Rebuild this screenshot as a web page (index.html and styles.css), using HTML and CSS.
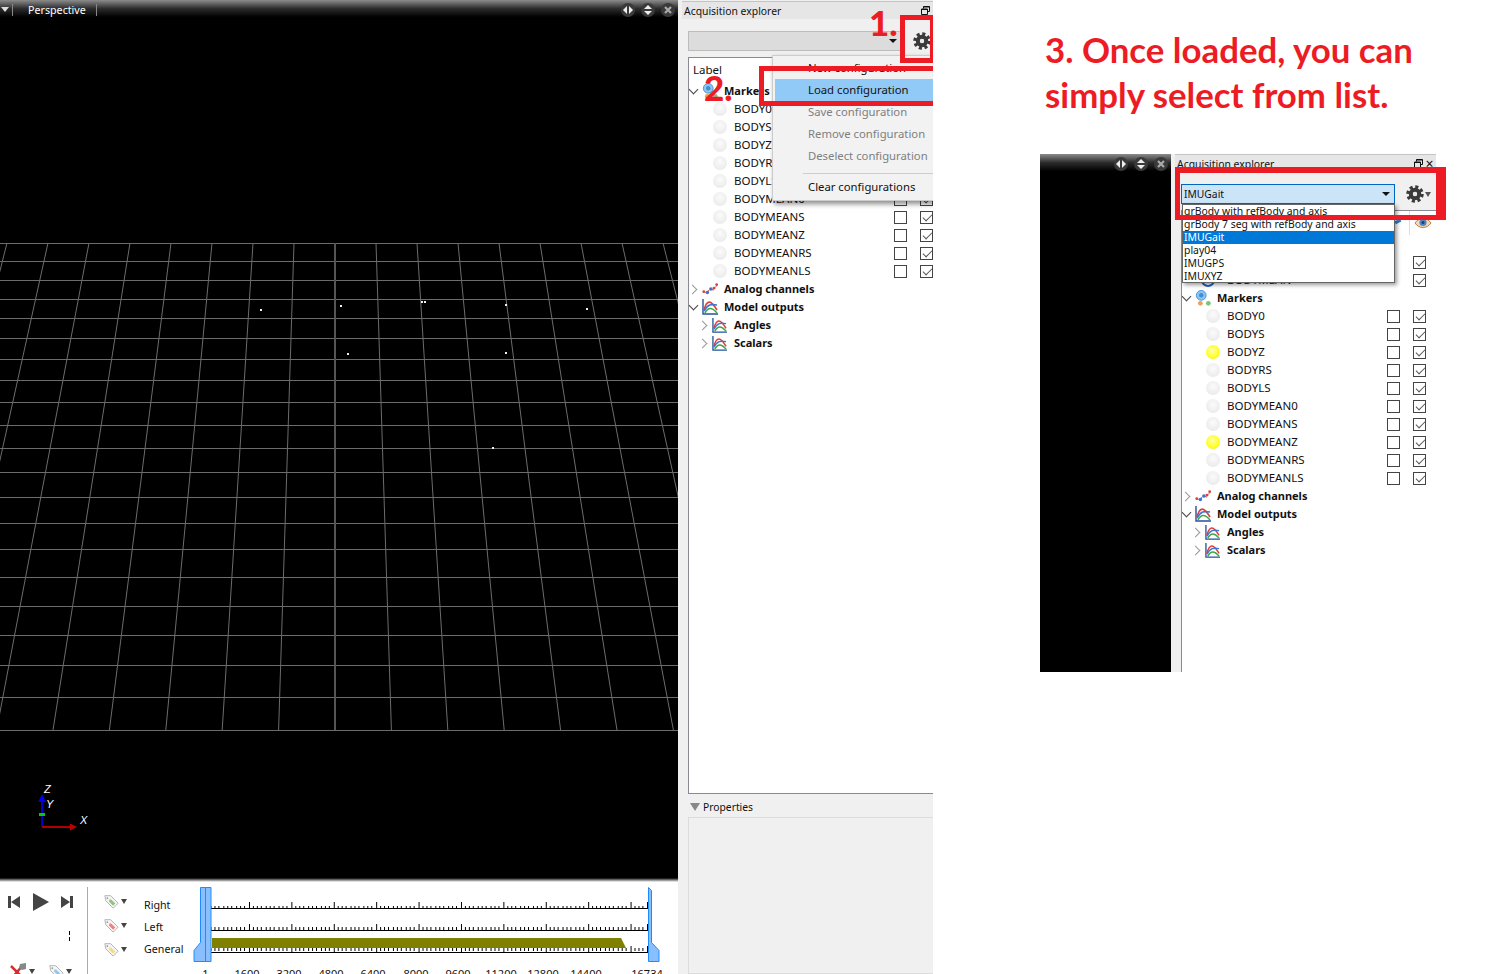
FILE: index.html
```html
<!DOCTYPE html>
<html lang="en">

<head>
    <meta charset="UTF-8">
    <title>Acquisition explorer - configurations</title>
    <link rel="stylesheet" href="styles.css">
</head>

<body>
    <svg class="defs">
        <symbol id="gear" viewBox="0 0 18 18">
            <circle cx="9" cy="9" r="7" fill="none" stroke="#3a3a3a" stroke-width="3.500" stroke-dasharray="3 2.500"></circle>
            <circle cx="9" cy="9" r="4.200" fill="none" stroke="#3a3a3a" stroke-width="4"></circle>
            <circle cx="9" cy="9" r="2" fill="#e8e8e8"></circle>
        </symbol>
        <symbol id="chart" viewBox="0 0 16 16">
            <path d="M1 0v15H16" fill="none" stroke="#24509e" stroke-width="1.400"></path>
            <path d="M2 11C5 0 9 1 15 11" fill="none" stroke="#e0403c" stroke-width="1.600"></path>
            <path d="M2 12C6 5 9 5 15 6" fill="none" stroke="#3f74d0" stroke-width="1.600"></path>
            <path d="M3 14C6 8 10 8 15 14" fill="none" stroke="#3fa648" stroke-width="1.600"></path>
        </symbol>
        <symbol id="analog" viewBox="0 0 18 14">
            <path d="M1 10l4 1 5-4 3 1 4-6" fill="none" stroke="#e0403c" stroke-width="1.200" stroke-dasharray="2 1"></path>
            <circle cx="2" cy="10" r="1.600" fill="#e0403c"></circle>
            <circle cx="6" cy="11" r="2" fill="#3f74d0"></circle>
            <circle cx="10" cy="7" r="2" fill="#3f74d0"></circle>
            <circle cx="13.500" cy="6" r="1.600" fill="#e0403c"></circle>
            <circle cx="16.500" cy="2" r="1.600" fill="#e0403c"></circle>
        </symbol>
        <symbol id="markers" viewBox="0 0 18 18">
            <circle cx="7" cy="6" r="5.500" fill="#8fc4ee" stroke="#3f8fd6"></circle>
            <circle cx="7" cy="6" r="2.500" fill="#3f8fd6"></circle>
            <circle cx="6" cy="15" r="2.700" fill="#f0a050"></circle>
            <circle cx="15" cy="15" r="2.700" fill="#7cc47c"></circle>
        </symbol>
        <symbol id="tag" viewBox="0 0 18 18">
            <path d="M1 2h7l9 9-6 6-9-9z" fill="#f4f4f4" stroke="#aaa"></path>
            <path d="M6.500 6.500h2l5 5-2.500 2.500-5-5z" fill="currentColor"></path>
            <circle cx="4" cy="5" r="1" fill="#999"></circle>
        </symbol>
        <symbol id="eye" viewBox="0 0 18 12">
            <path d="M1 6c4-6 12-6 16 0-4 6-12 6-16 0z" fill="#f4d9b8" stroke="#c8793c"></path>
            <circle cx="9" cy="5.500" r="3.600" fill="#4d86c8"></circle>
            <circle cx="9" cy="5.500" r="1.500" fill="#1d3f70"></circle>
        </symbol>
        <symbol id="hresize" viewBox="0 0 14 14">
            <circle cx="7" cy="7" r="7" fill="#3a3a3a"></circle>
            <path d="M6 3v8L2 7zM8 3v8l4-4z" fill="#eee"></path>
        </symbol>
        <symbol id="vresize" viewBox="0 0 14 14">
            <circle cx="7" cy="7" r="7" fill="#3a3a3a"></circle>
            <path d="M3 6h8L7 2zM3 8h8l-4 4z" fill="#eee"></path>
        </symbol>
        <symbol id="closer" viewBox="0 0 14 14">
            <circle cx="7" cy="7" r="7" fill="#3a3a3a"></circle>
            <path d="M4 4l6 6M10 4l-6 6" stroke="#aaa" stroke-width="2.200"></path>
        </symbol>
        <symbol id="restore" viewBox="0 0 9 9">
            <path d="M2.500 2.500V.5h6v5h-2M.5 3h6v5.500h-6z" fill="none" stroke="#111"></path>
            <path d="M2.500 1h6M.5 3.500h6" stroke="#111"></path>
        </symbol>
    </svg>

    <div class="app">
        <div class="viewer">
            <div class="dock-bar">
                <span class="dock-menu"></span>
                <span class="dock-name">Perspective</span>
                <span class="dock-buttons">
                    <svg class="dock-btn"><use href="#hresize"></use></svg>
                    <svg class="dock-btn"><use href="#vresize"></use></svg>
                    <svg class="dock-btn"><use href="#closer"></use></svg>
                </span>
            </div>
            <svg class="scene" viewBox="0 19 678 859">
                <path class="grid" d="M0 243.500H678M0 261.500H678M0 280.500H678M0 299.500H678M0 318.500H678M0 338.500H678M0 359.500H678M0 380.500H678M0 402.500H678M0 425.500H678M0 448.500H678M0 472.500H678M0 497.500H678M0 523.500H678M0 549.500H678M0 577.500H678M0 606.500H678M0 635.500H678M0 665.500H678M0 697.500H678M0 730.500H678"></path>
                <path class="grid" d="M7 243L-116.200 730M48 243L-59.800 730M89 243L-3.400 730M130 243L53 730M171 243L109.400 730M212 243L165.800 730M253 243L222.200 730M294 243L278.600 730M376 243L391.400 730M417 243L447.800 730M458 243L504.200 730M499 243L560.600 730M540 243L617 730M581 243L673.400 730M622 243L729.800 730M663 243L786.200 730"></path>
                <path class="grid-axis" d="M335 243V730"></path>
                <path class="points" d="M260 309h2v2h-2zM340 305h2v2h-2zM421 301h2v2h-2zM424 301h2v2h-2zM505 304h2v2h-2zM586 308h2v2h-2zM347 353h2v2h-2zM505 352h2v2h-2zM492 447h2v2h-2z"></path>
                <path d="M42 827V800" stroke="#0000c8" stroke-width="2"></path>
                <path d="M38 802l4-8 4 8z" fill="#0000e0"></path>
                <path d="M42 827H72" stroke="#b00000" stroke-width="2"></path>
                <path d="M70 823.500l7 3.500-7 3.500z" fill="#c00000"></path>
                <path d="M39 814.500h6" stroke="#00d000" stroke-width="3"></path>
                <text class="axis-label" x="44" y="793">Z</text>
                <text class="axis-label" x="46" y="808">Y</text>
                <text class="axis-label" x="80" y="824">X</text>
            </svg>
            <div class="timeline">
                <div class="controls">
                    <div class="transport">
                        <svg class="skip" viewBox="0 0 12 12"><path d="M0 0h3v12H0zM12 0v12L3 6z"></path></svg>
                        <svg class="play" viewBox="0 0 16 18"><path d="M0 0l16 9-16 9z"></path></svg>
                        <svg class="skip" viewBox="0 0 12 12"><path d="M12 0H9v12h3zM0 0v12l9-6z"></path></svg>
                    </div>
                    <div class="grip"></div>
                    <div class="tools">
                        <svg class="wrench" viewBox="0 0 18 18">
                            <path d="M2 4l13 13M14 3L3 16" stroke="#d03030" stroke-width="2.500"></path>
                            <path d="M17 1l-6 1-1 4 3 2 4-1z" fill="#888"></path>
                        </svg>
                        <span class="down"></span>
                        <svg class="tag tag-blue"><use href="#tag"></use></svg>
                        <span class="down"></span>
                    </div>
                </div>
                <div class="events">
                    <div class="event-tags">
                        <div class="event"><svg class="tag tag-green"><use href="#tag"></use></svg><span class="down"></span></div>
                        <div class="event"><svg class="tag tag-red"><use href="#tag"></use></svg><span class="down"></span></div>
                        <div class="event"><svg class="tag tag-yellow"><use href="#tag"></use></svg><span class="down"></span></div>
                    </div>
                    <div class="event-names">
                        <div class="event-name">Right</div>
                        <div class="event-name">Left</div>
                        <div class="event-name">General</div>
                    </div>
                </div>
                <svg class="tracks" viewBox="190 887 488 87">
                    <defs>
                        <pattern id="ticks" patternUnits="userSpaceOnUse" x="204.600" y="902" width="42.400" height="7">
                            <path d="M2 0v7M6.240 3.500v3.500M10.480 3.500v3.500M14.720 3.500v3.500M18.960 3.500v3.500M23.200 3.500v3.500M27.440 3.500v3.500M31.680 3.500v3.500M35.920 3.500v3.500M40.160 3.500v3.500" stroke="#000" stroke-width="1" shape-rendering="crispEdges"></path>
                        </pattern>
                    </defs>
                    <rect x="204.600" y="902" width="443" height="7" fill="url(#ticks)"></rect>
                    <rect x="204.600" y="924" width="443" height="7" fill="url(#ticks)"></rect>
                    <rect x="204.600" y="946" width="443" height="7" fill="url(#ticks)"></rect>
                    <path d="M206 908.500H648M206 930.500H648M206 952.500H648M647.500 902V909M647.500 924V931M647.500 946V953" stroke="#000" fill="none"></path>
                    <path d="M212 938H621L626 948H212z" fill="#808000"></path>
                    <path class="cursor" d="M200.500 887.500h5v74h-11.500v-11l6.500-8zM205.500 887.500h5.500v74h-5.500z"></path>
                    <path class="cursor" d="M648.500 887.500l3 3v52l7.500 8v11h-10.500z"></path>
                    <text class="tick-label" x="205.500" y="978" text-anchor="middle">1</text>
                    <text class="tick-label" x="247" y="978" text-anchor="middle">1600</text>
                    <text class="tick-label" x="289" y="978" text-anchor="middle">3200</text>
                    <text class="tick-label" x="331" y="978" text-anchor="middle">4800</text>
                    <text class="tick-label" x="373" y="978" text-anchor="middle">6400</text>
                    <text class="tick-label" x="416" y="978" text-anchor="middle">8000</text>
                    <text class="tick-label" x="458" y="978" text-anchor="middle">9600</text>
                    <text class="tick-label" x="501" y="978" text-anchor="middle">11200</text>
                    <text class="tick-label" x="543" y="978" text-anchor="middle">12800</text>
                    <text class="tick-label" x="586" y="978" text-anchor="middle">14400</text>
                    <text class="tick-label" x="647" y="978" text-anchor="middle">16734</text>
                </svg>
            </div>
        </div>

        <div class="panel panel-main">
            <div class="panel-title"><span class="panel-name">Acquisition explorer</span><svg class="restore"><use href="#restore"></use></svg><span class="panel-close">×</span></div>
            <div class="config-bar">
                <div class="combo combo-off"><span class="combo-text"></span><span class="combo-arrow"></span></div>
                <svg class="gear"><use href="#gear"></use></svg>
            </div>
            <div class="tree">
                <div class="tree-head">Label</div>
                <div class="row group"><span class="chev open"></span><svg class="ico"><use href="#markers"></use></svg><span class="name">Markers</span></div>
                <div class="row"><span class="chev none"></span><span class="led"></span><span class="name">BODY0</span><span class="box"></span><span class="box on"></span></div>
                <div class="row"><span class="chev none"></span><span class="led"></span><span class="name">BODYS</span><span class="box"></span><span class="box on"></span></div>
                <div class="row"><span class="chev none"></span><span class="led"></span><span class="name">BODYZ</span><span class="box"></span><span class="box on"></span></div>
                <div class="row"><span class="chev none"></span><span class="led"></span><span class="name">BODYRS</span><span class="box"></span><span class="box on"></span></div>
                <div class="row"><span class="chev none"></span><span class="led"></span><span class="name">BODYLS</span><span class="box"></span><span class="box on"></span></div>
                <div class="row"><span class="chev none"></span><span class="led"></span><span class="name">BODYMEAN0</span><span class="box"></span><span class="box on"></span></div>
                <div class="row"><span class="chev none"></span><span class="led"></span><span class="name">BODYMEANS</span><span class="box"></span><span class="box on"></span></div>
                <div class="row"><span class="chev none"></span><span class="led"></span><span class="name">BODYMEANZ</span><span class="box"></span><span class="box on"></span></div>
                <div class="row"><span class="chev none"></span><span class="led"></span><span class="name">BODYMEANRS</span><span class="box"></span><span class="box on"></span></div>
                <div class="row"><span class="chev none"></span><span class="led"></span><span class="name">BODYMEANLS</span><span class="box"></span><span class="box on"></span></div>
                <div class="row group"><span class="chev"></span><svg class="ico"><use href="#analog"></use></svg><span class="name">Analog channels</span></div>
                <div class="row group"><span class="chev open"></span><svg class="ico"><use href="#chart"></use></svg><span class="name">Model outputs</span></div>
                <div class="row sub"><span class="chev"></span><svg class="ico"><use href="#chart"></use></svg><span class="name">Angles</span></div>
                <div class="row sub"><span class="chev"></span><svg class="ico"><use href="#chart"></use></svg><span class="name">Scalars</span></div>
            </div>
            <div class="props-head"><span class="props-arrow"></span>Properties</div>
            <div class="props-body"></div>

            <!-- menu and annotations lie over the panel -->
            <div class="menu">
                <div class="menu-item">New configuration</div>
                <div class="menu-item active">Load configuration</div>
                <div class="menu-item off">Save configuration</div>
                <div class="menu-item off">Remove configuration</div>
                <div class="menu-item off">Deselect configuration</div>
                <div class="menu-sep"></div>
                <div class="menu-item">Clear configurations</div>
            </div>
            <div class="mark mark-gear"></div>
            <div class="mark mark-load"></div>
            <span class="step step-1">1.</span>
            <span class="step step-2">2.</span>
        </div>

        <div class="side">
            <h1 class="side-title">3. Once loaded, you can<br>simply select from list.</h1>
            <div class="mini">
                <div class="mini-viewer">
                    <div class="dock-bar">
                        <span class="dock-buttons">
                            <svg class="dock-btn"><use href="#hresize"></use></svg>
                            <svg class="dock-btn"><use href="#vresize"></use></svg>
                            <svg class="dock-btn"><use href="#closer"></use></svg>
                        </span>
                    </div>
                </div>
                <div class="panel panel-mini">
                    <div class="panel-title"><span class="panel-name">Acquisition explorer</span><svg class="restore"><use href="#restore"></use></svg><span class="panel-close">×</span></div>
                    <div class="config-bar">
                        <div class="combo combo-on"><span class="combo-text">IMUGait</span><span class="combo-arrow"></span></div>
                        <svg class="gear"><use href="#gear"></use></svg>
                        <span class="gear-arrow"></span>
                    </div>
                    <div class="tree">
                        <div class="tree-head">Label<span class="head-pin"></span><span class="head-cell"><svg class="head-eye"><use href="#eye"></use></svg></span></div>
                        <div class="row group"><span class="chev open"></span><svg class="ico"><use href="#markers"></use></svg><span class="name">Segments</span></div>
                        <div class="row"><span class="chev none"></span><span class="led"></span><span class="name">BODY</span><span class="box on"></span></div>
                        <div class="row"><span class="chev none"></span><span class="led ring"></span><span class="name">BODYMEAN</span><span class="box on"></span></div>
                        <div class="row group"><span class="chev open"></span><svg class="ico"><use href="#markers"></use></svg><span class="name">Markers</span></div>
                        <div class="row"><span class="chev none"></span><span class="led"></span><span class="name">BODY0</span><span class="box"></span><span class="box on"></span></div>
                        <div class="row"><span class="chev none"></span><span class="led"></span><span class="name">BODYS</span><span class="box"></span><span class="box on"></span></div>
                        <div class="row"><span class="chev none"></span><span class="led lit"></span><span class="name">BODYZ</span><span class="box"></span><span class="box on"></span></div>
                        <div class="row"><span class="chev none"></span><span class="led"></span><span class="name">BODYRS</span><span class="box"></span><span class="box on"></span></div>
                        <div class="row"><span class="chev none"></span><span class="led"></span><span class="name">BODYLS</span><span class="box"></span><span class="box on"></span></div>
                        <div class="row"><span class="chev none"></span><span class="led"></span><span class="name">BODYMEAN0</span><span class="box"></span><span class="box on"></span></div>
                        <div class="row"><span class="chev none"></span><span class="led"></span><span class="name">BODYMEANS</span><span class="box"></span><span class="box on"></span></div>
                        <div class="row"><span class="chev none"></span><span class="led lit"></span><span class="name">BODYMEANZ</span><span class="box"></span><span class="box on"></span></div>
                        <div class="row"><span class="chev none"></span><span class="led"></span><span class="name">BODYMEANRS</span><span class="box"></span><span class="box on"></span></div>
                        <div class="row"><span class="chev none"></span><span class="led"></span><span class="name">BODYMEANLS</span><span class="box"></span><span class="box on"></span></div>
                        <div class="row group"><span class="chev"></span><svg class="ico"><use href="#analog"></use></svg><span class="name">Analog channels</span></div>
                        <div class="row group"><span class="chev open"></span><svg class="ico"><use href="#chart"></use></svg><span class="name">Model outputs</span></div>
                        <div class="row sub"><span class="chev"></span><svg class="ico"><use href="#chart"></use></svg><span class="name">Angles</span></div>
                        <div class="row sub"><span class="chev"></span><svg class="ico"><use href="#chart"></use></svg><span class="name">Scalars</span></div>
                    </div>
                    <div class="dropdown">
                        <div class="drop-item">grBody with refBody and axis</div>
                        <div class="drop-item">grBody 7 seg with refBody and axis</div>
                        <div class="drop-item selected">IMUGait</div>
                        <div class="drop-item">play04</div>
                        <div class="drop-item">IMUGPS</div>
                        <div class="drop-item">IMUXYZ</div>
                    </div>
                    <div class="mark mark-combo"></div>
                </div>
            </div>
        </div>
    </div>
</body>

</html>
```

FILE: styles.css
```css
* {
    margin: 0;
    padding: 0;
    box-sizing: border-box;
}

html,
body {
    height: 100%;
    overflow: hidden;
}

body {
    background: #fff;
    color: #111;
    font-family: "Noto Sans", "Liberation Sans", sans-serif;
    font-size: 11.500px;
}

svg {
    display: block;
}

.defs {
    display: none;
}

.app {
    display: flex;
    height: 974px;
}

/* viewer */
.viewer {
    width: 678px;
    display: flex;
    flex-direction: column;
    background: #000;
}

.dock-bar {
    display: flex;
    align-items: center;
    height: 19px;
    flex: none;
    background: linear-gradient(#8c8c8c, #2c2c2c 45%, #000 90%);
    color: #fff;
    font-size: 10.700px;
}

.dock-menu {
    width: 13px;
    height: 12px;
    border-right: 1px solid #888;
    position: relative;
}

.dock-menu::before {
    content: "";
    position: absolute;
    left: 1px;
    top: 3px;
    border: 4px solid transparent;
    border-top: 5px solid #ddd;
}

.dock-name {
    height: 12px;
    line-height: 12px;
    width: 84px;
    padding-left: 15px;
    border-right: 1px solid #888;
}

.dock-buttons {
    margin-left: auto;
    display: flex;
    gap: 6px;
    padding-right: 3px;
}

.dock-btn {
    width: 14px;
    height: 14px;
}

.scene {
    width: 678px;
    height: 859px;
    flex: none;
    background: #000;
}

.grid {
    fill: none;
    stroke: #6c6c6c;
    stroke-width: 1;
}

.grid-axis {
    fill: none;
    stroke: #555;
    stroke-width: 2;
}

.points {
    fill: #f0f0f0;
}

.axis-label {
    fill: #fff;
    font-family: "Liberation Sans", sans-serif;
    font-size: 11px;
    font-style: italic;
}

/* timeline */
.timeline {
    flex: 1;
    display: flex;
    min-height: 0;
    padding-top: 9px;
    background: linear-gradient(#000, #fff 4px);
    overflow: hidden;
}

.controls {
    width: 88px;
    flex: none;
    border-right: 1px solid #aaa;
    display: flex;
    flex-direction: column;
}

.transport {
    display: flex;
    align-items: center;
    flex: none;
    height: 18px;
    margin-top: 6px;
    padding-left: 8px;
}

.skip {
    width: 12px;
    height: 12px;
    fill: #444;
}

.play {
    width: 16px;
    height: 18px;
    fill: #444;
    margin: 0 12px 0 13px;
}

.grip {
    flex: none;
    width: 1px;
    height: 11px;
    margin: 20px 0 0 69px;
    background: repeating-linear-gradient(#000 0, #000 4px, transparent 4px, transparent 6px);
}

.tools {
    display: flex;
    align-items: center;
    flex: none;
    margin-top: 20px;
    padding-left: 9px;
}

.wrench {
    width: 18px;
    height: 18px;
}

.tools .down {
    margin-left: 2px;
    margin-right: 14px;
}

.tools .down:last-child {
    margin-right: 0;
}

.down {
    width: 0;
    height: 0;
    border: 3.500px solid transparent;
    border-top: 5px solid #444;
    border-bottom: 0;
    flex: none;
}

.events {
    width: 102px;
    flex: none;
    display: flex;
}

.event-tags {
    width: 56px;
    flex: none;
    padding-top: 2px;
}

.event {
    display: flex;
    align-items: center;
    height: 24px;
    padding-left: 16px;
}

.event .down {
    margin-left: 2px;
}

.event-names {
    padding-top: 7px;
}

.event-name {
    height: 22px;
    line-height: 22px;
    font-size: 10.700px;
}

.tag {
    width: 15px;
    height: 15px;
    flex: none;
}

.tag-green {
    color: #8fc47c;
}

.tag-red {
    color: #f08080;
}

.tag-yellow {
    color: #f4dc80;
}

.tag-blue {
    color: #90c8f4;
}

.tracks {
    width: 488px;
    height: 87px;
    flex: none;
}

.cursor {
    fill: #8abfff;
    stroke: #1e8cff;
    stroke-width: 1;
}

.tick-label {
    font-size: 11px;
    fill: #111;
}

/* dock panel */
.panel {
    position: relative;
    flex: none;
    overflow: hidden;
    display: flex;
    flex-direction: column;
    padding-left: 10px;
    background: #f0f0f0;
}

.panel-main {
    width: 255px;
    height: 974px;
    padding-top: 1px;
}

.panel-title {
    display: flex;
    align-items: center;
    flex: none;
    width: 261px;
    height: 18px;
    margin-left: -6px;
    padding-left: 2px;
    background: #e6e6e6;
    border-top: 1px solid #c4c4c4;
    font-size: 10.400px;
}

.panel-name {
    flex: 1;
    white-space: nowrap;
}

.restore {
    width: 9px;
    height: 9px;
    flex: none;
}

.panel-close {
    width: 13px;
    text-align: center;
    font-size: 14px;
    line-height: 12px;
    flex: none;
}

.config-bar {
    position: relative;
    display: flex;
    align-items: center;
    flex: none;
    width: 255px;
    height: 20px;
    margin-top: 12px;
}

.combo {
    position: relative;
    width: 214px;
    height: 20px;
    line-height: 18px;
    padding-left: 2px;
    font-size: 10.300px;
}

.combo-off {
    background: #dcdcdc;
    border: 1px solid #bcbcbc;
}

.combo-on {
    background: #cce4f7;
    border: 1px solid #0067c0;
}

.combo-arrow {
    position: absolute;
    right: 4px;
    top: 7px;
    border: 4px solid transparent;
    border-top: 4px solid #111;
    border-bottom: 0;
}

.gear {
    width: 18px;
    height: 18px;
    margin-left: 11px;
    flex: none;
}

.gear-arrow {
    margin-left: 1px;
    border: 3.500px solid transparent;
    border-top: 5px solid #555;
    border-bottom: 0;
}

/* tree */
.tree {
    flex: 1;
    width: 255px;
    margin-top: 6px;
    min-height: 0;
    background: #fff;
    border: 1px solid #8a8a94;
    padding-bottom: 4px;
    overflow: hidden;
}

.tree-head {
    position: relative;
    height: 24px;
    padding: 5px 0 0 4px;
    line-height: 14px;
}

.head-cell {
    position: absolute;
    right: 0;
    top: 0;
    width: 27px;
    height: 24px;
    border-left: 1px solid #ddd;
}

.head-eye {
    margin: 5px 0 0 4px;
    width: 18px;
    height: 14px;
}

.head-pin {
    position: absolute;
    right: 35px;
    top: 9px;
    width: 6px;
    height: 3px;
    background: #2f7fc8;
    transform: rotate(-25deg);
}

.row {
    display: flex;
    align-items: center;
    height: 18px;
    padding-left: 10px;
    padding-right: 9px;
}

.row.group {
    padding-left: 0;
    font-weight: 700;
    font-size: 11px;
}

.row.group .ico {
    width: 16px;
    height: 16px;
    margin-left: 3px;
    margin-right: 6px;
}

.row.sub {
    font-weight: 700;
    font-size: 11px;
}

.chev {
    position: relative;
    width: 10px;
    height: 18px;
    flex: none;
}

.chev::before {
    content: "";
    position: absolute;
    left: 0;
    top: 6px;
    width: 6px;
    height: 6px;
    border-right: 1.500px solid #999;
    border-top: 1.500px solid #999;
    transform: rotate(45deg);
}

.chev.open::before {
    left: 1px;
    top: 4px;
    border-color: #444;
    transform: rotate(135deg);
}

.chev.none::before {
    display: none;
}

.ico {
    width: 15px;
    height: 15px;
    margin-left: 3px;
    margin-right: 7px;
    flex: none;
}

.led {
    width: 14px;
    height: 14px;
    margin-left: 4px;
    margin-right: 7px;
    border-radius: 50%;
    background: radial-gradient(circle at 50% 40%, #fbfbfb, #ebebeb 75%, #e2e2e2);
    flex: none;
}

.led.lit {
    background: radial-gradient(circle at 45% 40%, #ffffb0, #ffff20 60%, #e8d820);
}

.led.ring {
    margin-left: -1px;
    margin-right: 12px;
    background: #fff;
    border: 2px solid #2a62c8;
}

.name {
    white-space: nowrap;
    padding-bottom: 2px;
}

.box {
    position: relative;
    width: 13px;
    height: 13px;
    border: 1px solid #444;
    background: #fff;
    flex: none;
}

.name + .box {
    margin-left: auto;
}

.box + .box {
    margin-left: 13px;
}

.box.on::after {
    content: "";
    position: absolute;
    left: 3.500px;
    top: 0;
    width: 4px;
    height: 8px;
    border-right: 1.500px solid #555;
    border-bottom: 1.500px solid #555;
    transform: rotate(45deg);
}

/* properties */
.props-head {
    display: flex;
    align-items: center;
    flex: none;
    height: 23px;
    padding-top: 2px;
    font-size: 10.300px;
}

.props-arrow {
    margin: 0 3px 0 2px;
    border: 5px solid transparent;
    border-top: 8px solid #888;
    border-bottom: 0;
}

.props-body {
    flex: none;
    height: 157px;
    width: 255px;
    border: 1px solid #dcdcdc;
}

/* context menu */
.menu {
    position: absolute;
    left: 94px;
    top: 55px;
    width: 200px;
    height: 146px;
    padding: 1px 2px;
    background: #f2f2f2;
    border: 1px solid #ccc;
    box-shadow: 2px 3px 5px rgba(0, 0, 0, .45);
    font-size: 11.300px;
}

.menu-item {
    height: 22px;
    line-height: 21px;
    padding-left: 33px;
    white-space: nowrap;
}

.menu-item.active {
    background: #91c9f7;
}

.menu-item.off {
    color: #808080;
}

.menu-sep {
    height: 1px;
    margin: 6px 0 2px 28px;
    background: #ccc;
}

/* red annotations */
.mark {
    position: absolute;
    border: 5px solid #ed1c24;
}

.mark-gear {
    left: 222px;
    top: 15px;
    width: 35px;
    height: 48px;
}

.mark-load {
    left: 81px;
    top: 66px;
    width: 200px;
    height: 40px;
}

.mark-combo {
    left: 4px;
    top: 13px;
    width: 271px;
    height: 53px;
    border-top-width: 6px;
    border-right-width: 10px;
}

.step {
    position: absolute;
    color: #ed1c24;
    font-family: Lato, "Liberation Sans", sans-serif;
    font-size: 35px;
    font-weight: 900;
    line-height: 33px;
}

.step-1 {
    left: 191px;
    top: 6px;
}

.step-2 {
    left: 26px;
    top: 71px;
}

/* right column */
.side {
    flex: 1;
    padding: 27px 0 0 107px;
}

.side-title {
    margin-left: 5px;
    color: #ed1c24;
    font-family: Lato, "Liberation Sans", sans-serif;
    font-size: 34.800px;
    font-weight: 700;
    line-height: 45px;
    white-space: nowrap;
}

.mini {
    display: flex;
    width: 396px;
    height: 518px;
    margin-top: 37px;
}

.mini-viewer {
    width: 131px;
    background: #000;
    flex: none;
}

.panel-mini {
    width: 265px;
    overflow: visible;
}

.panel-mini .tree {
    border-width: 1px 0 0 1px;
    padding-bottom: 0;
}

.panel-mini .row {
    padding-right: 10px;
}

.dropdown {
    position: absolute;
    left: 11px;
    top: 50px;
    width: 213px;
    height: 79px;
    background: #fff;
    border: 1px solid #666;
    box-shadow: 2px 2px 4px rgba(0, 0, 0, .4);
}

.drop-item {
    height: 13px;
    line-height: 13px;
    padding-left: 1px;
    font-size: 10.400px;
    white-space: nowrap;
}

.drop-item.selected {
    background: #0078d7;
    color: #fff;
}
```
